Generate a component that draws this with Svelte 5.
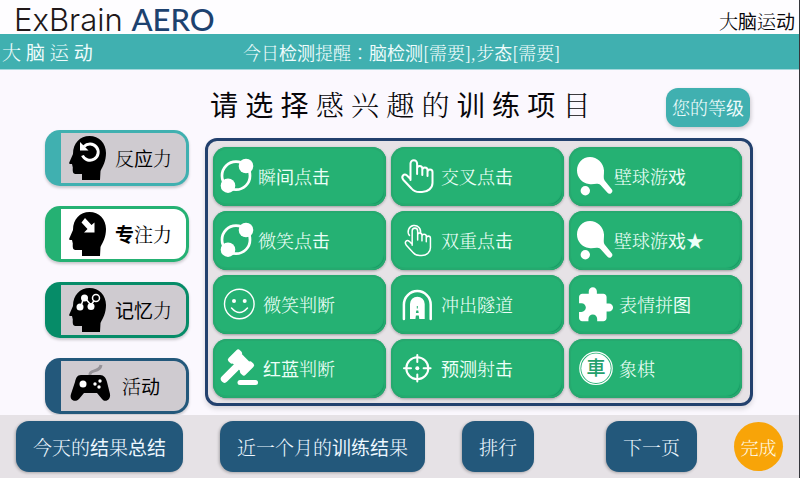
<script>
  const categories = [
    { name: '反应力', icon: 'react', tone: 'teal' },
    { name: '专注力', icon: 'focus', tone: 'green', active: true },
    { name: '记忆力', icon: 'memory', tone: 'jade' },
    { name: '活动', icon: 'pad', tone: 'navy' }
  ];
  const games = [
    { name: '瞬间点击', icon: 'orbit' },
    { name: '交叉点击', icon: 'hand', roomy: true },
    { name: '壁球游戏', icon: 'paddle' },
    { name: '微笑点击', icon: 'orbit' },
    { name: '双重点击', icon: 'tap', roomy: true },
    { name: '壁球游戏★', icon: 'paddle' },
    { name: '微笑判断', icon: 'smile', roomy: true },
    { name: '冲出隧道', icon: 'tunnel', roomy: true },
    { name: '表情拼图', icon: 'puzzle', roomy: true },
    { name: '红蓝判断', icon: 'gavel', roomy: true },
    { name: '预测射击', icon: 'target', roomy: true },
    { name: '象棋', icon: 'chess', roomy: true }
  ];

  const sansRun = /([脑动检测态训练项请选择应专记忆间击戏红蓝预图结总级]+)/;
  const runs = (text) => text.split(sansRun).map((part, i) => ({ part, sans: i % 2 === 1 }));
</script>

{#snippet mixed(text)}{#each runs(text) as r}{#if r.sans}<span class="sans">{r.part}</span>{:else}{r.part}{/if}{/each}{/snippet}

{#snippet handShape()}
  <path d="M12.500 26V9.500a3.300 3.300 0 0 1 6.600 0V20M19.100 16V14.500a2.600 2.600 0 0 1 5.200 0V21M24.300 17V16a2.600 2.600 0 0 1 5.200 0V22M29.500 19V18a2.500 2.500 0 0 1 5 0V29C34.500 34 30 38 24 38H21.500C18 38 15.500 37 13.500 34.500L5.500 26C2.500 22.500 6 19 9 21.500L12.500 25" />
{/snippet}

{#snippet gameIcon(kind)}
  <svg class="game-icon" viewBox="0 0 38 45" aria-hidden="true">
    {#if kind === 'orbit'}
      <circle cx="16" cy="21.700" r="14" class="line" stroke-width="2.700" />
      <circle cx="26" cy="12" r="7.300" /><circle cx="8" cy="31.700" r="7.300" />
    {:else if kind === 'hand'}
      <g class="line" stroke-width="2">{@render handShape()}</g>
    {:else if kind === 'tap'}
      <g class="line" stroke-width="1.800" transform="translate(3.800 4.800) scale(.83 .86)">{@render handShape()}</g>
      <path class="line" stroke-width="1.500" d="M11.500 17.500A6.200 6.200 0 1 1 22.300 15.500" />
    {:else if kind === 'paddle'}
      <path d="M14 3C21 3 27.500 8.500 28 16.500C28.200 20.500 27 24 28.600 26.500L35.500 35A2.600 2.600 0 0 1 31.500 38.800L24.500 31C21 28.500 18 30.800 13 30C6 29 1 23.500 1 16.500C1 9 6.500 3 14 3Z" />
      <circle cx="9.300" cy="36.700" r="4.700" />
    {:else if kind === 'smile'}
      <circle cx="19.300" cy="22" r="14.800" class="line" stroke-width="1.400" />
      <circle cx="14" cy="19" r="2" /><circle cx="24.700" cy="19" r="2" />
      <path class="line" stroke-width="1.500" d="M11.500 26Q19.500 35 27.500 26" />
    {:else if kind === 'tunnel'}
      <path class="line" stroke-width="2.500" d="M5.900 37V22.500a13.400 13.400 0 0 1 26.800 0V37" />
      <path d="M12 37V22a7.300 7.300 0 0 1 14.700 0V37Z" />
      <path class="cut" d="M18.800 24h1v2.500h-1zM18.300 28.500h2l.4 2.500h-2.800zM17.900 33.500h2.900l.5 3.500h-3.900z" />
    {:else if kind === 'puzzle'}
      <path transform="translate(-.2 3.700) scale(1.620)" d="M20.500 11H19V7c0-1.100-.9-2-2-2h-4V3.500C13 2.120 11.880 1 10.500 1S8 2.120 8 3.500V5H4c-1.100 0-1.990.9-1.990 2v3.800H3.500c1.490 0 2.700 1.210 2.700 2.700s-1.210 2.700-2.700 2.700H2V20c0 1.100.9 2 2 2h3.800v-1.500c0-1.490 1.210-2.700 2.700-2.700s2.700 1.210 2.700 2.700V22H17c1.100 0 2-.9 2-2v-4h1.500c1.380 0 2.500-1.120 2.500-2.500S21.880 11 20.500 11z" />
    {:else if kind === 'gavel'}
      <g transform="translate(21 16.500) rotate(45)">
        <rect x="-12" y="-8" width="7" height="16" rx="2.500" />
        <rect x="-9" y="-6.500" width="18" height="13" />
        <rect x="5" y="-8" width="7" height="16" rx="2.500" />
        <rect x="-3.700" y="4" width="7.400" height="23" rx="3.700" />
      </g>
      <rect x="17.500" y="34" width="20.500" height="5" rx="2.500" />
    {:else if kind === 'target'}
      <circle cx="19.300" cy="22.300" r="11" class="line" stroke-width="2" />
      <path class="line" stroke-width="2" d="M19.300 9V16M19.300 28.600V35.600M6 22.300H13M25.600 22.300H32.600" />
      <circle cx="19.300" cy="22.300" r="2" />
    {:else}
      <circle cx="20" cy="22.300" r="16.200" class="line" stroke-width="1.200" />
      <circle cx="20" cy="22.300" r="14.700" />
      <text x="20" y="29" text-anchor="middle">車</text>
    {/if}
  </svg>
{/snippet}

{#snippet categoryIcon(kind)}
  <svg class="category-icon" viewBox="0 0 42 44" aria-hidden="true">
    {#if kind === 'pad'}
      <path d="M21 11C20 5 31 9 32 1" fill="none" stroke="#969398" stroke-width="3" />
      <path d="M12 11H31C35 11 37 14 38 18L41 30C42 36 36 39 33 35L28 29H15L10 35C6 39 0 36 2 30L6 18C7 14 8 11 12 11Z" />
      <g class="mark"><circle cx="14" cy="20" r="3.500" /><circle cx="31" cy="17" r="1.700" /><circle cx="26" cy="20" r="1.700" /><circle cx="30" cy="23" r="1.700" /></g>
    {:else}
      <path d="M20.500 0C30 0 37 7 37 17C37 25 34 30 31.500 35L31 44H13V38H7C4 38 3.500 36 3.800 31.500L3 28H.8C0 27.500 0 27 .5 26L4 18C4 7 11 0 20.500 0Z" />
      {#if kind === 'react'}
        <path class="mark-line" d="M15 10.500A8.200 8.200 0 1 1 13.500 19.500" />
        <path class="mark" d="M11 6L19.500 14.500H11Z" />
      {:else if kind === 'focus'}
        <path class="mark" d="M16 6L22.500 13L25.500 10.500V20.500H15L18.500 17L12.500 10.500Z" />
      {:else}
        <path d="M12 18L15 9L22 17L27 10" fill="none" stroke="#fff" stroke-width="1.500" />
        <g class="mark"><circle cx="15.500" cy="10" r="3.500" /><circle cx="11" cy="19" r="3.500" /><circle cx="22" cy="18.500" r="3.500" /></g>
        <circle cx="27" cy="10" r="3.500" fill="#000" stroke="#fff" stroke-width="1.500" />
      {/if}
    {/if}
  </svg>
{/snippet}

<div class="page">
  <header>
    <div class="logo">ExBrain <strong>AERO</strong></div>
    <span class="section-name">{@render mixed('大脑运动')}</span>
  </header>
  <div class="band">
    <h2>{@render mixed('大 脑 运 动')}</h2>
    <p>{@render mixed('今日检测提醒：脑检测[需要],步态[需要]')}</p>
  </div>
  <main>
    <nav aria-label="训练类别">
      {#each categories as c}
        <button class="category {c.tone}" class:active={c.active}>
          <span class="face">{@render categoryIcon(c.icon)}<span class="label">{@render mixed(c.name)}</span></span>
        </button>
      {/each}
    </nav>
    <section>
      <div class="heading">
        <h1>{@render mixed('请 选 择 感 兴 趣 的 训 练 项 目')}</h1>
        <button class="level">{@render mixed('您的等级')}</button>
      </div>
      <div class="panel">
        {#each games as g}
          <button class="game" class:roomy={g.roomy}>{@render gameIcon(g.icon)}<span class="name">{@render mixed(g.name)}</span></button>
        {/each}
      </div>
    </section>
  </main>
  <footer>
    <button>{@render mixed('今天的结果总结')}</button>
    <button>{@render mixed('近一个月的训练结果')}</button>
    <button>{@render mixed('排行')}</button>
    <button class="next">{@render mixed('下一页')}</button>
    <button class="done">{@render mixed('完成')}</button>
  </footer>
</div>

<style>
  :global(body) { background: #fbf8fe; }
  .page {
    box-sizing: border-box;
    min-height: 100vh;
    display: flex;
    flex-direction: column;
    border-right: 1px solid #35363b;
    font-family: "Noto Serif CJK JP", "Noto Serif CJK SC", "Noto Sans CJK SC", sans-serif;
    font-weight: 300;
    color: #08070a;
  }
  h1, h2, p { margin: 0; font-weight: 300; }
  .sans { font-family: "Noto Sans CJK SC", sans-serif; font-weight: 400; }
  button {
    box-sizing: border-box;
    border: 0;
    padding: 0;
    font: inherit;
    line-height: 28px;
    white-space: nowrap;
    cursor: pointer;
  }
  header {
    height: 34px;
    display: flex;
    justify-content: space-between;
    align-items: center;
    padding: 0 4px 0 14px;
    background: #fefdff;
  }
  .logo { padding-top: 4px; font: 300 31px/34px Inter, sans-serif; color: #211819; }
  .logo strong { font-family: Lato, sans-serif; font-weight: 500; color: #1d426f; }
  .section-name { font-size: 19px; line-height: 20px; padding-top: 8px; }
  .band {
    height: 36px;
    display: flex;
    align-items: center;
    background: #40b0b0;
    border-bottom: 1px solid #a5d8dc;
    box-sizing: border-box;
    color: #effcfc;
  }
  .band h2 { flex: 0 0 243px; box-sizing: border-box; padding-left: 2px; font-size: 19px; line-height: 34px; }
  .band p { font-size: 18px; line-height: 34px; }
  main {
    flex: 1;
    display: grid;
    grid-template-columns: 144px minmax(0, 1fr);
    column-gap: 16px;
    padding: 0 46px 0 45px;
  }
  nav { display: flex; flex-direction: column; gap: 20px; padding-top: 60px; }
  .category {
    height: 56px;
    padding: 3px 3px 3px 16px;
    border-radius: 15px;
    background: var(--tone);
    box-shadow: 0 2px 3px #0003;
    font-size: 19px;
    color: #000;
  }
  .teal { --tone: #40b0b0; }
  .green { --tone: #25b173; }
  .jade { --tone: #068c68; }
  .navy { --tone: #23587b; }
  .face {
    height: 100%;
    display: flex;
    align-items: center;
    gap: 4px;
    padding-left: 8px;
    background: #cfcbd0;
    border-radius: 0 12px 12px 0;
  }
  .active .face { background: #fff; font-weight: 400; }
  .active .sans { font-weight: 700; }
  .category-icon { width: 42px; height: 44px; flex: none; }
  .navy .face { gap: 11px; }
  .mark { fill: #fff; }
  .mark-line { fill: none; stroke: #fff; stroke-width: 3; }
  .heading {
    height: 68px;
    display: flex;
    justify-content: space-between;
    align-items: center;
    padding: 0 3px 0 5px;
  }
  h1 { font-size: 28px; line-height: 40px; }
  .level {
    width: 84px;
    height: 39px;
    margin-top: 6px;
    border-radius: 12px;
    background: #40b0b0;
    box-shadow: 1px 2px 4px #0003;
    color: #effcfc;
    font-size: 18px;
  }
  .panel {
    display: grid;
    grid-template-columns: repeat(3, minmax(0, 1fr));
    gap: 5px;
    padding: 6px 8px 5px 5px;
    border: 3px solid #23416e;
    border-radius: 12px;
    background: #e6e2e6;
    box-shadow: 0 3px 5px #0002;
  }
  .game {
    height: 59px;
    display: flex;
    align-items: center;
    padding: 0 7px;
    border-radius: 14px;
    background: #25b173;
    box-shadow: inset 0 0 0 2px #26a96f, inset -2px -2px 1px #149761, 0 1px 3px #0005;
    color: #ecfff8;
    font-size: 18px;
  }
  .roomy { gap: 5px; }
  .name { padding-bottom: 2px; }
  .game-icon { width: 38px; height: 45px; flex: none; fill: #fff; overflow: visible; }
  .game-icon .line, .game-icon .line :global(path) {
    fill: none;
    stroke: #fff;
    stroke-linecap: round;
    stroke-linejoin: round;
  }
  .game-icon .cut { fill: #25b173; }
  .game-icon text { fill: #25a06d; font-family: "Noto Sans CJK JP", sans-serif; font-size: 19px; font-weight: 500; }
  footer {
    box-sizing: border-box;
    min-height: 63px;
    display: flex;
    align-items: center;
    gap: 37px;
    padding: 0 16px;
    background: #e6e2e6;
  }
  footer button {
    height: 51px;
    padding: 0 17px;
    border-radius: 13px;
    background: #23587b;
    box-shadow: -1px 1px 3px #0004;
    color: #edf7ff;
    font-size: 19px;
  }
  footer .next { margin-left: auto; }
  footer .done {
    width: 49px;
    height: 49px;
    padding: 0;
    border-radius: 50%;
    background: #f8a408;
    box-shadow: none;
    color: #fffbe8;
    font-size: 18px;
  }
</style>
